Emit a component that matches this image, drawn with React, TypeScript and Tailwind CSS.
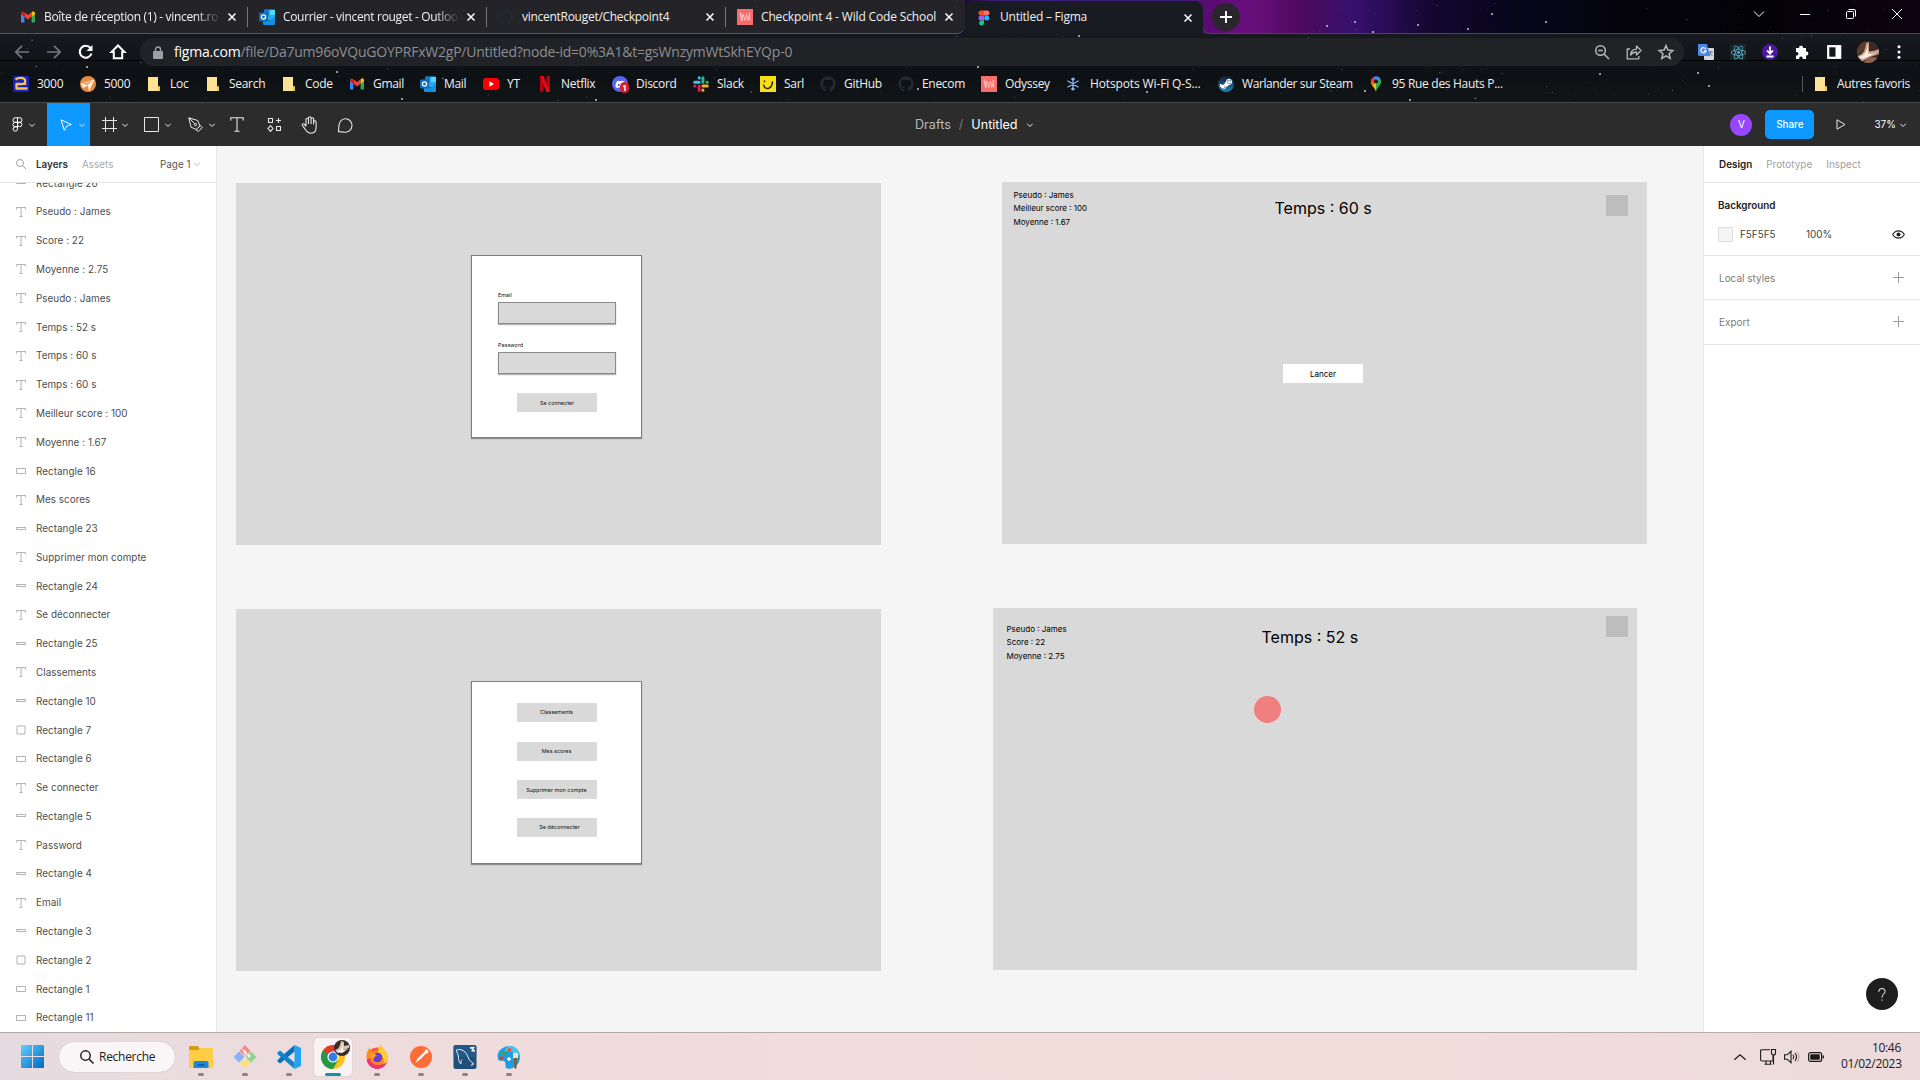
import React from 'react';
import { FaGithub, FaSteamSymbol, FaDiscord } from 'react-icons/fa';
import { SiReact } from 'react-icons/si';

type P = { c?: string; children?: React.ReactNode; vb?: string };

const Svg = ({ c = 'w-4 h-4', vb = '0 0 16 16', children }: P) => (
  <svg className={`${c} shrink-0 overflow-visible`} viewBox={vb} fill="none">
    {children}
  </svg>
);

/* ---------- starry browser theme ---------- */
const seeded = (seed: number) => () => {
  seed = (seed * 16807) % 2147483647;
  return seed / 2147483647;
};
const rnd = seeded(4217);
const stars = Array.from({ length: 300 }, () => ({
  x: rnd() * 1920,
  y: rnd() * 102,
  r: 0.35 + rnd() * rnd() * 0.6,
  o: 0.12 + rnd() * rnd() * 0.6,
}));
const brightStars = [
  [1418, 25], [1468, 29], [1355, 22], [1373, 32], [1546, 22], [1492, 14], [1327, 26],
  [1600, 74], [1709, 86], [1698, 73], [978, 67], [1147, 92], [1079, 36], [337, 72], [87, 67],
  [596, 100], [1365, 91], [1410, 100], [918, 89], [755, 1], [957, 1], [115, 28], [402, 99],
];
const Sky = () => (
  <svg className="absolute inset-0 h-[103px] w-[1920px]" viewBox="0 0 1920 103">
    {stars.map((s, i) => (
      <circle key={i} cx={s.x} cy={s.y} r={s.r} fill="#c9d2e0" opacity={s.o} />
    ))}
    {brightStars.map(([x, y], i) => (
      <circle key={i} cx={x} cy={y} r="1" fill="#f2f2ff" opacity="0.8" />
    ))}
  </svg>
);

/* ---------- brand marks ---------- */
const Gmail = () => (
  <Svg>
    <path d="M1 4.2v8.3c0 .6.4 1 1 1h2.4V7.2z" fill="#4285f4" />
    <path d="M15 4.2v8.3c0 .6-.4 1-1 1h-2.4V7.2z" fill="#34a853" />
    <path d="M4.4 3.2 8 6l3.6-2.8v4.6L8 10.5 4.4 7.800z" fill="#ea4335" />
    <path d="M1 4c0-1.500 1.700-2 2.700-1.300l.7.5v4.600L1 5.300z" fill="#c5221f" />
    <path d="M15 4c0-1.500-1.700-2-2.700-1.300l-.7.5v4.600L15 5.300z" fill="#fbbc04" />
  </Svg>
);
const Outlook = () => (
  <Svg>
    <rect x="5" y="0.500" width="11" height="11" rx="1" fill="#28a8ea" />
    <path d="M5 1h5.500v5H5z" fill="#0f78d4" />
    <path d="M10.500 1H16v5h-5.500z" fill="#50d9ff" />
    <path d="M4 8l6.500 4L16 8v7a1 1 0 0 1-1 1H5a1 1 0 0 1-1-1z" fill="#1490df" />
    <rect x="0" y="3.500" width="9" height="9" rx="1" fill="#0f6cbd" />
    <circle cx="4.500" cy="8" r="2.100" stroke="#fff" strokeWidth="1.300" />
  </Svg>
);
const Wild = () => (
  <Svg>
    <rect width="16" height="16" fill="#f76c6c" />
    <path d="M3 4.500l1.500 7L6.200 5l1.600 6.500L9.500 5l1.300 6.500 2.200-7M3.500 3.500l2 8M12 3.500l1 8" stroke="#fbc1bd" strokeWidth="1" />
  </Svg>
);
const FigmaMark = () => (
  <Svg>
    <path d="M5 .5h3v5H5a2.500 2.500 0 0 1 0-5z" fill="#f24e1e" />
    <path d="M8 .5h3a2.500 2.500 0 0 1 0 5H8z" fill="#ff7262" />
    <path d="M5 5.500h3v5H5a2.500 2.500 0 0 1 0-5z" fill="#a259ff" />
    <circle cx="10.700" cy="8" r="2.500" fill="#1abcfe" />
    <path d="M5 10.500h3V13a2.500 2.500 0 1 1-3-2.500z" fill="#0acf83" />
  </Svg>
);
const GitHubDim = () => <FaGithub className="h-4 w-4 shrink-0 text-[#24292e]" />;
const Folder = () => (
  <Svg>
    <path d="M2 1h10v9.500h2V15H2z" fill="#fde293" />
    <path d="M12 10.500h2V15h-3.500c1 0 1.500-.5 1.500-1.500z" fill="#eec95c" />
  </Svg>
);
const Site3000 = () => (
  <Svg>
    <rect width="16" height="16" rx="1" fill="#1a1fc0" />
    <path d="M2.500 3.500Q5 1.500 9 2q4 .5 3 4.500Q11 8.500 7 8H3.500v4.500H14.500M12 6.500V9" stroke="#f3c34b" strokeWidth="2.400" strokeLinejoin="round" />
  </Svg>
);
const Site5000 = () => (
  <Svg>
    <circle cx="8" cy="8" r="8" fill="#e98a3f" />
    <path d="M1 7.500 14.500 3.500 9 15.500 8 9.500 3 12z" fill="#fff3e4" />
    <path d="M2 8 13 4.500 7.500 9z" fill="#e9a065" />
  </Svg>
);
const YouTube = () => (
  <Svg>
    <rect y="2" width="16" height="12" rx="3" fill="#f00" />
    <path d="M6.500 5.300 11 8l-4.500 2.700z" fill="#fff" />
  </Svg>
);
const Netflix = () => (
  <Svg>
    <path d="M3 0h3.500v16L3 15.700z" fill="#b1060f" />
    <path d="M9.500 0H13v15.700L9.500 16z" fill="#b1060f" />
    <path d="M3 0h3.500L13 15.700 9.500 16z" fill="#e50914" />
  </Svg>
);
const Discord = () => (
  <div className="relative flex h-4 w-4 shrink-0 items-center justify-center rounded-full bg-[#5865f2]">
    <FaDiscord className="h-[11px] w-[11px] text-white" />
    <span className="absolute -right-px -bottom-px flex h-[11px] w-[9px] items-center justify-center rounded-full bg-[#d8202c] text-[8px] font-bold text-white">1</span>
  </div>
);
const Slack = () => (
  <Svg>
    <g strokeWidth="3" strokeLinecap="round">
      <path d="M6.200 1.700V2M1.700 6.200h4.500" stroke="#36c5f0" />
      <path d="M9.900 1.700v4.500M14.300 6.200H14" stroke="#2eb67d" />
      <path d="M14.300 9.900H9.900M9.900 14.300V14" stroke="#ecb22e" />
      <path d="M6.200 14.300V9.900M1.700 9.900H2" stroke="#e01e5a" />
    </g>
  </Svg>
);
const Sarl = () => (
  <Svg>
    <rect width="16" height="16" fill="#f7e017" />
    <path d="M3.500 8.500c1 6 8.500 5.500 9-3M4.500 4.500v1.800" stroke="#222" strokeWidth="1.500" />
  </Svg>
);
const Hotspot = () => (
  <Svg>
    <g stroke="#8ab4f8" strokeWidth="1.300">
      <path d="M7 1.500v13M1.500 4.800l11 6.400M1.500 11.200l11-6.400M5.300 2.500 7 4.200l1.700-1.700M5.300 13.500 7 11.800l1.700 1.700" />
    </g>
  </Svg>
);
const Steam = () => (
  <div className="flex h-4 w-4 shrink-0 items-center justify-center rounded-full bg-linear-to-b from-[#111d3a] to-[#1387b8]">
    <FaSteamSymbol className="h-[14px] w-[14px] text-white" />
  </div>
);
const MapPin = () => (
  <Svg>
    <path d="M8 16C7.500 12 2.800 9.500 2.800 5.500L8 5.500z" fill="#fbbc04" />
    <path d="M8 16c.5-4 5.200-6.500 5.200-10.500C13 3 11 1 8 5.500z" fill="#34a853" />
    <path d="M2.800 5.500A5.200 5.200 0 0 1 5 1.200L8 5.500 5 9z" fill="#ea4335" />
    <path d="M5 1.200A5.200 5.200 0 0 1 12.700 3L8 5.500z" fill="#4285f4" />
    <circle cx="8" cy="5.400" r="1.900" fill="#14181c" />
  </Svg>
);

/* ---------- browser chrome ---------- */
const Cross = () => (
  <Svg c="w-2 h-2" vb="0 0 8 8">
    <path d="M.5.5l7 7M7.500.5l-7 7" stroke="#fff" strokeWidth="1.500" />
  </Svg>
);

const tabs: { w: string; pad: string; icon: React.ReactNode; t: string; fade?: boolean; tr: string }[] = [
  { w: 'w-[239px]', pad: 'pl-3', icon: <Gmail />, t: 'Boîte de réception (1) - vincent.ro', fade: true, tr: 'tracking-[-0.33px]' },
  { w: 'w-[239px]', pad: 'pl-[11px]', icon: <Outlook />, t: 'Courrier - vincent rouget - Outloo', fade: true, tr: 'tracking-[-0.33px]' },
  { w: 'w-[239px]', pad: 'pl-[11px]', icon: <GitHubDim />, t: 'vincentRouget/Checkpoint4', tr: 'tracking-[-0.28px]' },
  { w: 'w-[240px]', pad: 'pl-[11px]', icon: <Wild />, t: 'Checkpoint 4 - Wild Code School', tr: 'tracking-[-0.15px]' },
];

const TabStrip = () => (
  <div className="relative flex h-[34px] items-stretch">
    <div className="flex w-[965px] rounded-br-lg border-b border-[#55545a] bg-[#252527]/95 pl-2">
      {tabs.map((t, i) => (
        <div key={i} className={`${t.w} ${t.pad} flex items-center ${i ? 'border-l border-[#77767a] [border-image:linear-gradient(to_bottom,transparent_22%,#77767a_22%,#77767a_80%,transparent_80%)_1]' : ''}`}>
          {t.icon}
          <div className={`relative ml-2 w-[177px] whitespace-nowrap ${t.tr} ${t.fade ? '[mask-image:linear-gradient(to_right,#000_86%,transparent_100%)]' : ''}`}>{t.t}</div>
          <div className="ml-[7px]"><Cross /></div>
        </div>
      ))}
    </div>
    <div className="mt-px flex w-[238px] items-center rounded-t-lg bg-[#181b21] pl-[11px]">
      <FigmaMark />
      <div className="relative -top-[0.5px] ml-2 w-[180px] tracking-[-0.22px]">Untitled – Figma</div>
      <div className="ml-1"><Cross /></div>
    </div>
    <div className="flex flex-1 items-center rounded-bl-lg border-b border-[#4b4850] pl-[9px]">
      <div className="flex h-7 w-7 items-center justify-center rounded-full bg-[#29272c]">
        <Svg c="w-3 h-3" vb="0 0 12 12"><path d="M6 0v12M0 6h12" stroke="#fff" strokeWidth="1.900" /></Svg>
      </div>
      <div className="mr-[18px] mb-[5px] ml-auto flex items-center gap-[36px]">
        <Svg c="w-[10px] h-[10px]" vb="0 0 10 10"><path d="M0 2.500l5 5 5-5" stroke="#fff" /></Svg>
        <Svg c="w-[10px] h-[10px]" vb="0 0 10 10"><path d="M0 5.500h10" stroke="#fff" /></Svg>
        <Svg c="w-[10px] h-[10px]" vb="0 0 10 10"><path d="M.5 3.500q0-1 1-1h5q1 0 1 1v5q0 1-1 1h-5q-1 0-1-1zM2.500.5H8q1.500 0 1.500 1.500v5.500" stroke="#fff" /></Svg>
        <Svg c="w-[10px] h-[10px]" vb="0 0 10 10"><path d="M0 0l10 10M10 0L0 10" stroke="#fff" /></Svg>
      </div>
    </div>
  </div>
);

const AddressBar = () => (
  <div className="relative flex h-[36px] items-center">
    <div className="absolute inset-x-0 top-[26px] h-px bg-black" />
    <div className="relative flex w-[140px] items-center gap-4 pl-[14px]">
      <Svg><path d="M15 8H2M8 1.800 1.800 8 8 14.200" stroke="#77797c" strokeWidth="1.700" /></Svg>
      <Svg><path d="M1 8h13M8 1.800 14.200 8 8 14.200" stroke="#77797c" strokeWidth="1.700" /></Svg>
      <Svg><path d="M13.500 9.500A6 6 0 1 1 12.500 4" stroke="#fff" strokeWidth="2.100" /><path d="M14.500 1v6h-6z" fill="#fff" /></Svg>
      <Svg><path d="M3.800 14.200V8H1.500L8 1.500 14.500 8h-2.300v6.200z" stroke="#fff" strokeWidth="2" /></Svg>
    </div>
    <div className="relative flex h-7 w-[1544px] items-center rounded-full bg-[#202226] pl-[13px] text-[14px]">
      <Svg c="w-[10px] h-[13px]" vb="0 0 10 13"><rect y="5" width="10" height="8" rx="1" fill="#9aa0a6" /><path d="M2.500 5.500V3.500a2.500 2.500 0 0 1 5 0v2" stroke="#9aa0a6" strokeWidth="1.400" /></Svg>
      <div className="relative -top-[0.5px] ml-[11px] whitespace-nowrap tracking-[-0.22px] text-[#8c8f93]"><span className="text-white">figma.com</span>/file/Da7um96oVQuGOYPRFxW2gP/Untitled?node-id=0%3A1&amp;t=gsWnzymWtSkhEYQp-0</div>
      <div className="mr-[10px] ml-auto flex gap-4">
        <Svg><g stroke="#b6b8bb" strokeWidth="1.500"><circle cx="6.500" cy="6.500" r="4.800" /><path d="M10 10l5 5M4.200 6.500h4.600" /></g></Svg>
        <Svg><path d="M4 5H1.200v9.800h11.600V12M4.500 11c.5-4 2.700-5.800 6-5.800V2L15 6.500 10.500 11V8C8 8 6 9 4.500 11z" stroke="#b6b8bb" strokeWidth="1.300" strokeLinejoin="round" /></Svg>
        <Svg><path d="M8 1.500l1.900 4.600 4.900.4-3.700 3.200 1.100 4.800L8 11.900l-4.200 2.600 1.100-4.800L1.200 6.500l4.900-.4z" stroke="#b6b8bb" strokeWidth="1.500" /></Svg>
      </div>
    </div>
    <div className="relative flex flex-1 items-center gap-4 pl-[14px]">
      <Svg><rect x="6" y="4" width="10" height="12" rx="1" fill="#d5d8dd" /><path d="M0 0h9l3 12H1.500Q0 12 0 10.500z" fill="#4a86e8" /><path d="M7.800 5.200A2.600 2.600 0 1 0 8 6.800H5.700" stroke="#fff" strokeWidth="1.200" /><path d="M10.500 8h4.500M12.700 7v1c0 2-1.200 3-2 3.500M11.500 9l3 3" stroke="#6b7a8a" /></Svg>
      <div className="flex h-4 w-4 items-center justify-center bg-[#202326]"><SiReact className="h-[15px] w-[15px] text-[#58bcd8]" /></div>
      <Svg><circle cx="8" cy="8" r="8" fill="#4a1a9e" /><path d="M8 2.500v6M5 6.500l3 3.200 3-3.200M4.500 12.500h7" stroke="#fff" strokeWidth="1.800" /></Svg>
      <Svg><path d="M2 4h3.200a1.900 1.900 0 1 1 3.700 0H12v3.600a1.900 1.900 0 1 1 0 3.700V15H8.600a1.800 1.800 0 1 0-3.300 0H2v-3.600a1.800 1.800 0 1 0 0-3.400z" fill="#fff" /></Svg>
      <Svg><rect x="2.200" y="2.200" width="12" height="11.600" stroke="#fff" strokeWidth="2.200" /><path d="M9.500 2h5v12h-5z" fill="#fff" /></Svg>
      <div className="-ml-px h-[22px] w-[22px] overflow-hidden rounded-full">
        <Svg c="w-[22px] h-[22px]" vb="0 0 22 22">
          <rect width="22" height="22" fill="#3a2a24" />
          <path d="M0 0h9l-1 8-8 6z" fill="#5b3d30" />
          <path d="M0 15c5-1 8-4 9-13l3-1v9c3 1 7-1 10-2v5l-9 3-7 4H0z" fill="#c89f88" />
          <path d="M1 16c6-1 9-5 10-13v9c2 2 6 0 9-1l-7 4-7 3z" fill="#fbeee4" />
          <path d="M6 22l6-6 10 1v5z" fill="#8f6552" />
        </Svg>
      </div>
      <Svg c="w-4 h-4 -ml-[3px]"><g fill="#fff" transform="translate(-1 0)"><circle cx="8" cy="2.800" r="1.500" /><circle cx="8" cy="8" r="1.500" /><circle cx="8" cy="13.200" r="1.500" /></g></Svg>
    </div>
  </div>
);

const bookmarks: { w: string; icon: React.ReactNode; t: string }[] = [
  { w: 'w-[67px]', icon: <Site3000 />, t: '3000' },
  { w: 'w-[66px]', icon: <Site5000 />, t: '5000' },
  { w: 'w-[59px]', icon: <Folder />, t: 'Loc' },
  { w: 'w-[76px]', icon: <Folder />, t: 'Search' },
  { w: 'w-[68px]', icon: <Folder />, t: 'Code' },
  { w: 'w-[71px]', icon: <Gmail />, t: 'Gmail' },
  { w: 'w-[63px]', icon: <Outlook />, t: 'Mail' },
  { w: 'w-[54px]', icon: <YouTube />, t: 'YT' },
  { w: 'w-[75px]', icon: <Netflix />, t: 'Netflix' },
  { w: 'w-[81px]', icon: <Discord />, t: 'Discord' },
  { w: 'w-[67px]', icon: <Slack />, t: 'Slack' },
  { w: 'w-[60px]', icon: <Sarl />, t: 'Sarl' },
  { w: 'w-[78px]', icon: <GitHubDim />, t: 'GitHub' },
  { w: 'w-[83px]', icon: <GitHubDim />, t: 'Enecom' },
  { w: 'w-[85px] tracking-[-0.3px]', icon: <Wild />, t: 'Odyssey' },
  { w: 'w-[152px] tracking-[-0.13px]', icon: <Hotspot />, t: 'Hotspots Wi-Fi Q-S...' },
  { w: 'w-[150px] tracking-[-0.4px]', icon: <Steam />, t: 'Warlander sur Steam' },
  { w: 'w-[150px]', icon: <MapPin />, t: '95 Rue des Hauts P...' },
];

const Bookmarks = () => (
  <div className="relative flex h-[33px] items-center border-b border-[#47484a] pb-[4px] pl-[13px] tracking-[-0.3px] whitespace-nowrap">
    {bookmarks.map((b, i) => (
      <div key={i} className={`${b.w} flex shrink-0 items-center gap-2`}>{b.icon}<span>{b.t}</span></div>
    ))}
    <div className="mr-[10px] ml-auto flex items-center gap-2">
      <div className="mr-[2px] h-4 w-px bg-[#55585b]" />
      <Folder />
      <span>Autres favoris</span>
    </div>
  </div>
);

const Browser = () => (
  <header className="relative h-[103px] shrink-0 overflow-hidden bg-[#101317] font-['Open_Sans',sans-serif] text-[12px] text-[#f1f1f1]">
    <div className="absolute inset-x-0 top-0 h-[34px] bg-[linear-gradient(90deg,#1a0630_0%,#1a0630_50%,#3a1f7a_52%,#3a1f7a_61%,#5a0a72_63%,#6a0f7c_65%,#4a0a5c_68%,#37106f_70.500%,#140730_74.500%,#07061a_79%,#04030c_85%,#030206_92%,#0c0310_100%)]" />
    <div className="absolute inset-x-0 top-[34px] h-[70px] bg-[linear-gradient(180deg,#16191e,#0e1114_60%,#121518)]" />
    <Sky />
    <TabStrip />
    <AddressBar />
    <Bookmarks />
  </header>
);

/* ---------- editor toolbar ---------- */
const Down = ({ c = 'w-[6px] h-[6px]', s = '#e8e8e8' }: { c?: string; s?: string }) => (
  <Svg c={c} vb="0 0 6 6"><path d="M.3 1.800 3 4.500l2.700-2.700" stroke={s} strokeWidth="1" /></Svg>
);

const Toolbar = () => (
  <div className="relative flex h-[43px] shrink-0 items-stretch bg-[#2c2c2c] text-[#fff]">
    <div className="flex w-[47px] items-center pl-[10px]">
      <Svg c="w-[15px] h-[15px]" vb="0 0 15 15"><g stroke="#fff" strokeWidth="1"><path d="M7.500.8H5.200a2.200 2.200 0 0 0 0 4.500h2.300zM7.500.8h2.300a2.200 2.200 0 0 1 0 4.500H7.500zM7.500 5.300H5.200a2.200 2.200 0 0 0 0 4.500h2.300zM7.500 9.800H5.200a2.200 2.200 0 1 0 2.300 2.200z" /><circle cx="9.700" cy="7.500" r="2.200" /></g></Svg>
      <div className="ml-[4px]"><Down /></div>
    </div>
    <div className="flex w-[43px] items-center bg-[#0d99ff] pl-[13px]">
      <Svg c="w-3 h-3" vb="0 0 12 12"><path d="M1 .8l10.300 4.700-4.500 1.600L4.300 11.300z" stroke="#fff" strokeLinejoin="round" /></Svg>
      <div className="ml-[7px]"><Down /></div>
    </div>
    <div className="flex items-center pl-[12px]">
      <Svg c="w-[15px] h-[15px]" vb="0 0 15 15"><path d="M3.500 0v15M11.500 0v15M0 3.500h15M0 11.500h15" stroke="#e8e8e8" /></Svg>
      <div className="ml-[5px]"><Down /></div>
    </div>
    <div className="flex items-center pl-[16px]">
      <Svg c="w-[15px] h-[15px]" vb="0 0 15 15"><path d="M.5.5h14v14H.5z" stroke="#e8e8e8" /></Svg>
      <div className="ml-[6px]"><Down /></div>
    </div>
    <div className="flex items-center pl-[17px]">
      <Svg c="w-[15px] h-[15px]" vb="0 0 15 15"><g stroke="#e8e8e8"><path d="M.8.8l9 2.700 2.200 5.500-3.500 3.500L3 10.200zM.8.8l6 6M8 12.800l4.300-4.300 2 2-4 4z" /><circle cx="7.500" cy="7.500" r="1.200" /></g></Svg>
      <div className="ml-[6px]"><Down /></div>
    </div>
    <div className="flex items-center pl-[15px]">
      <Svg c="w-[14px] h-[15px]" vb="0 0 14 15"><path d="M.8 3.500V.8h12.400v2.700M7 .8v13.400M4.500 14.200h5" stroke="#e8e8e8" strokeWidth="1.100" /></Svg>
    </div>
    <div className="flex items-center pl-[23px]">
      <Svg c="w-[15px] h-[15px]" vb="0 0 15 15"><path d="M1.500 1.500h4v4h-4zM9.500 9.500h4v4h-4zM3.500 8.700 6 11.500l-2.500 2.800L1 11.500zM11.500 1v5M9 3.500h5" stroke="#e8e8e8" strokeWidth="1.100" /></Svg>
    </div>
    <div className="flex items-center pl-[19px]">
      <Svg c="w-[17px] h-[18px]" vb="0 0 17 18"><path d="M5 10V3.500a1.200 1.200 0 0 1 2.500 0V8M7.500 8V2a1.200 1.200 0 0 1 2.600 0v6M10.100 8V3a1.200 1.200 0 0 1 2.500 0v5.500M12.600 6a1.200 1.200 0 0 1 2.500 0v5.500c0 3.500-2 5.700-5 5.700-4 0-4.800-2.200-6.200-4.400L1.300 9.300c-.5-1.300 1-2.100 2-1.100L5 10.500" stroke="#e8e8e8" strokeWidth="1.100" /></Svg>
    </div>
    <div className="flex items-center pt-px pl-[20px]">
      <Svg c="w-[15px] h-[15px]" vb="0 0 15 15"><path d="M1 14.200V7.500a6.500 6.700 0 1 1 6.500 6.700z" transform="rotate(5 7.500 7.500)" stroke="#e8e8e8" strokeWidth="1.100" strokeLinejoin="round" /></Svg>
    </div>
    <div className="absolute inset-y-0 left-[915px] flex items-center pt-px text-[12.600px]">
      <span className="text-[#b9b9b9]">Drafts</span>
      <span className="mx-[8px] text-[#7b7b7b]">/</span>
      <span className="text-white">Untitled</span>
      <div className="ml-[9px]"><Down /></div>
    </div>
    <div className="ml-auto flex items-center pr-[14px]">
      <div className="flex h-[22px] w-[22px] items-center justify-center rounded-full bg-[#9747ff] text-[10px]">V</div>
      <div className="ml-[13px] flex h-[29px] w-[49px] items-center justify-center rounded-[5px] bg-[#0d99ff] text-[9.900px] font-medium">Share</div>
      <Svg c="w-[10px] h-[11px] ml-[22px]" vb="0 0 10 11"><path d="M1 .8l8 4.700-8 4.700z" stroke="#e8e8e8" strokeLinejoin="round" /></Svg>
      <span className="ml-[28px] text-[9.900px] tracking-[0.08px]">37%</span>
      <div className="ml-[4px]"><Down /></div>
    </div>
  </div>
);

/* ---------- panels ---------- */
const layers = [
  '- Rectangle 26', 'T Pseudo : James', 'T Score : 22', 'T Moyenne : 2.75', 'T Pseudo : James', 'T Temps : 52 s',
  'T Temps : 60 s', 'T Temps : 60 s', 'T Meilleur score : 100', 'T Moyenne : 1.67', 'r Rectangle 16', 'T Mes scores',
  '- Rectangle 23', 'T Supprimer mon compte', '- Rectangle 24', 'T Se déconnecter', '- Rectangle 25', 'T Classements',
  '- Rectangle 10', 's Rectangle 7', 'r Rectangle 6', 'T Se connecter', '- Rectangle 5', 'T Password',
  '- Rectangle 4', 'T Email', '- Rectangle 3', 's Rectangle 2', 'r Rectangle 1', 'r Rectangle 11',
];
const glyphs: Record<string, React.ReactNode> = {
  T: <path d="M.5 2.500v-2h9v2M5 .5v9M3.500 9.500h3" stroke="#b3b3b3" />,
  '-': <path d="M.5 3.500h9v2h-9z" stroke="#b3b3b3" />,
  r: <path d="M.5 2.500h9v5h-9z" stroke="#b3b3b3" />,
  s: <path d="M1 1h8v8h-8z" stroke="#b3b3b3" />,
};

const LeftPanel = () => (
  <aside className="flex w-[217px] shrink-0 flex-col border-r border-[#e5e5e5] bg-white">
    <div className="flex h-[37px] shrink-0 items-center border-b border-[#e5e5e5] pl-4 font-medium">
      <Svg c="w-[10px] h-[10px]" vb="0 0 10 10"><circle cx="4" cy="4" r="3.500" stroke="#a0a0a0" /><path d="M6.500 6.500 10 10" stroke="#a0a0a0" /></Svg>
      <span className="mt-px ml-[10px] w-[46px] font-semibold text-[#333]">Layers</span>
      <span className="mt-px w-[78px] font-normal text-[#a8a8a8]">Assets</span>
      <span className="mt-px font-normal text-[#555]">Page 1</span>
      <div className="ml-[4px]"><Down s="#b3b3b3" /></div>
    </div>
    <div className="min-h-0 flex-1 overflow-hidden">
      <div className="-mt-[14.250px]">
        {layers.map((l, i) => (
          <div key={i} className="flex h-[28.790px] items-center gap-[10px] pl-4 tracking-[0.03px] text-[#4d4d4d]">
            <Svg c="w-[10px] h-[10px]" vb="0 0 10 10">{glyphs[l[0]]}</Svg>
            <span>{l.slice(2)}</span>
          </div>
        ))}
      </div>
    </div>
  </aside>
);

const Plus = () => <Svg c="w-[11px] h-[11px] -mt-[3px]" vb="0 0 11 11"><path d="M5.500 0v11M0 5.500h11" stroke="#9a9a9a" /></Svg>;

const RightPanel = () => (
  <aside className="relative flex w-[217px] shrink-0 flex-col border-l border-[#e5e5e5] bg-white">
    <div className="flex h-[37px] shrink-0 items-center gap-[14px] border-b border-[#e5e5e5] pt-px pl-[15px] tracking-[0.04px] text-[#a0a0a0]">
      <span className="font-semibold tracking-normal text-[#222]">Design</span>
      <span>Prototype</span>
      <span>Inspect</span>
    </div>
    <div className="flex h-[73px] flex-col border-b border-[#e5e5e5] pt-[8px] pl-[14px]">
      <div className="flex h-[29px] items-center font-semibold text-[#222]">Background</div>
      <div className="flex h-[28px] items-center text-[#444]">
        <div className="h-[15px] w-[15px] border border-[#dedede] bg-[#f5f5f5]" />
        <span className="mt-px ml-[7px] w-[66px]">F5F5F5</span>
        <span className="mt-px">100%</span>
        <Svg c="w-[13px] h-[9px] mr-[15px] ml-auto" vb="0 0 13 9"><path d="M.7 4.500C3.500-.3 9.500-.3 12.300 4.500 9.500 9.300 3.500 9.300.7 4.500z" stroke="#222" strokeWidth="1.100" /><circle cx="6.500" cy="4.500" r="2" fill="#222" /></Svg>
      </div>
    </div>
    <div className="flex h-[44px] items-center justify-between border-b border-[#e5e5e5] pt-[2px] pr-4 pl-[15px] tracking-[0.06px] text-[#7a7a7a]"><span>Local styles</span><Plus /></div>
    <div className="flex h-[45px] items-center justify-between border-b border-[#e5e5e5] pt-px pr-4 pl-[15px] tracking-[0.06px] text-[#7a7a7a]"><span>Export</span><Plus /></div>
    <div className="absolute right-[22px] bottom-[22px] flex h-8 w-8 items-center justify-center rounded-full bg-[#1e1e1e]">
      <Svg c="w-[8px] h-[13px]" vb="0 0 8 13"><path d="M.8 4V3.300A3.200 2.800 0 0 1 7.200 3.300C7.200 6 4 5.800 4 9.500M4 11.500v1.200" stroke="#fff" /></Svg>
    </div>
  </aside>
);

/* ---------- canvas ---------- */
const Frame = ({ c, children }: P) => <div className={`absolute h-[362px] bg-[#d9d9d9] ${c}`}>{children}</div>;
const Card = ({ children }: P) => (
  <div className="absolute top-[72px] left-[235px] h-[183px] w-[171px] border border-[#7d7d7d] bg-white text-[5.450px] text-[#111] shadow-[0_1px_1px_rgba(0,0,0,0.35)]">{children}</div>
);
const Btn = ({ c, children }: P) => <div className={`absolute left-[45px] flex h-[19px] w-[80px] items-center justify-center bg-[#d9d9d9] ${c}`}>{children}</div>;
const Field = ({ c }: P) => <div className={`absolute left-[26px] h-[22px] w-[118px] border border-[#8a8a8a] bg-[#d9d9d9] shadow-[0_1px_1px_rgba(0,0,0,0.3)] ${c}`} />;

const Canvas = () => (
  <main className="relative flex-1 overflow-hidden bg-[#f5f5f5] text-black">
    <Frame c="left-[19px] top-[37px] w-[644.500px]">
      <Card>
        <span className="absolute top-[35px] left-[26px]">Email</span>
        <Field c="top-[46px]" />
        <span className="absolute top-[85px] left-[26px]">Password</span>
        <Field c="top-[96px]" />
        <Btn c="top-[137px] pt-px">Se connecter</Btn>
      </Card>
    </Frame>
    <Frame c="left-[19px] top-[463px] w-[644.500px]">
      <Card>
        <Btn c="top-[21px] pr-px">Classements</Btn>
        <Btn c="top-[60px] pr-px">Mes scores</Btn>
        <Btn c="top-[98px] pt-px pr-px">Supprimer mon compte</Btn>
        <Btn c="top-[136px] pl-[5px]">Se déconnecter</Btn>
      </Card>
    </Frame>
    <Frame c="left-[785px] top-[36px] w-[644.500px]">
      <div className="absolute top-[7px] left-[11.500px] text-[8px] leading-[13.400px] whitespace-nowrap">
        <div>Pseudo : James</div><div>Meilleur score : 100</div><div>Moyenne : 1.67</div>
      </div>
      <div className="absolute top-[14px] left-[272.500px] text-[16px] leading-6 whitespace-nowrap">Temps : 60 s</div>
      <div className="absolute top-[13px] left-[604px] h-[21px] w-[22px] bg-[#bdbdbd]" />
      <div className="absolute top-[182px] left-[281px] flex h-[19px] w-[80px] items-center justify-center bg-white text-[8px]">Lancer</div>
    </Frame>
    <Frame c="left-[775.500px] top-[462px] w-[644px]">
      <div className="absolute top-[15px] left-[14px] text-[8px] leading-[13.400px] whitespace-nowrap">
        <div>Pseudo : James</div><div>Score : 22</div><div>Moyenne : 2.75</div>
      </div>
      <div className="absolute top-[17px] left-[269px] text-[16px] leading-6 whitespace-nowrap">Temps : 52 s</div>
      <div className="absolute top-[8px] left-[613.500px] h-[21px] w-[22px] bg-[#bdbdbd]" />
      <div className="absolute top-[87.500px] left-[261px] h-[27px] w-[27px] rounded-full bg-[#f08080]" />
    </Frame>
  </main>
);

/* ---------- taskbar ---------- */
const apps: { active?: boolean; icon: React.ReactNode }[] = [
  { icon: <><path d="M1 1h8l2 3h12v5H0V2q0-1 1-1z" fill="#d99a16" /><path d="M0 5h9l2-2h12q1 0 1 1v18q0 1-1 1H1q-1 0-1-1z" fill="#ffce45" /><path d="M4.500 23v-5.500Q4.500 16 6 16h12q1.500 0 1.500 1.500V23z" fill="#1e88d8" /><path d="M8.500 20h7" stroke="#0a5aa0" strokeWidth="1.600" /></> },
  { icon: <><path d="M12 0l5.500 6-5.500 5.500L6.500 6z" fill="#f58a8a" /><path d="M6 6.500l5.500 5.500L6 17.500.5 12z" fill="#8ab0f5" /><path d="M18 6.500l5.500 5.500-5.500 5.500-5.500-5.500z" fill="#8ed68a" /><path d="M12 12.500l5.500 5.500-5.500 5.500L6.500 18z" fill="#f8e07f" /><path d="M9 4l6 6M12 7v10" stroke="#f3e4e2" strokeWidth="1.300" /><circle cx="12" cy="7" r="1.400" fill="#fff" /><circle cx="16" cy="11" r="1.400" fill="#fff" /></> },
  { icon: <><path d="M17.500 0 24 3v18l-6.500 3z" fill="#24a4ef" /><path d="M17.500 0v6.500L3 18.500.5 16.500v-1.500z" fill="#0a6ebd" /><path d="M17.500 24v-6.500L3 5.500.5 7.500V9z" fill="#1283cf" /></> },
  { active: true, icon: <><circle cx="12" cy="12" r="12" fill="#fbc116" /><path d="M1.600 6A12 12 0 0 0 12 24l5.200-9L12 12z" fill="#229a4a" /><path d="M1.600 6l5.200 9L12 6z" fill="#229a4a" /><path d="M1.600 6A12 12 0 0 1 22.400 6H12a6 6 0 0 0-5 3z" fill="#e33b2e" /><circle cx="12" cy="12" r="5.600" fill="#fff" /><circle cx="12" cy="12" r="4.400" fill="#2f7de9" /><circle cx="21" cy="3" r="8" fill="#3a2c27" /><path d="M14 5c4-1 5-4 6-9l3 1v4l5-1v3l-6 2-5 3z" fill="#d9c3b5" /><path d="M15 7c4-1 6-3 7-9v7l5-1-6 4z" fill="#fbf3ec" /></> },
  { icon: <><circle cx="12" cy="13" r="10.500" fill="#ff5a36" /><path d="M2 7l2.500-4 2.500 3.500c2-1 4 0 6-1 0-2 1-4 3-5.500 0 4 7 6 7 14a10 10 0 0 1-4 7c-6 3-14 1-16-5C2 14 1 11 2 7z" fill="#ff8a1f" /><path d="M16 0c0 4 7 6 7 14 0 3-2 6-4 7 1-5-1-11-6-14 0-3 1-6 3-7z" fill="#ffcc33" /><path d="M1.800 15c1 5.500 5.700 9 10.200 9 4.500 0 8.500-2.500 10-7-3 3-10 4-13 2-3-1-4-4-4-6z" fill="#f0307a" /><circle cx="12.500" cy="12.500" r="4.800" fill="#6a3fd0" /><path d="M5 9c3-1 5-1 7 2-2 0-3 1-3 3-2 0-4-2-4-5z" fill="#ff9f2e" /></> },
  { icon: <><circle cx="12" cy="12" r="11" fill="#ff6c37" /><path d="M6 18l3-5 7-6.500 1.500 1.500-7 7z" fill="#fff" /><circle cx="17.500" cy="6.500" r="1.900" fill="#fff" /></> },
  { icon: <><rect x=".5" y="0" width="23" height="24" rx="2" fill="#1f4e79" /><path d="M2.500 0h19q2 0 2 2v10H.5V2q0-2 2-2z" fill="#2a6496" opacity=".5" /><path d="M3.500 5c5-2 10 2 11.500 7 1 3.500 3 4.500 6 7-2 0-3 .5-2 2M3.500 5c0 3 2 4 2 7 0 2 0 5 2.500 7 0-2 0-3.500 1-4.500" stroke="#e8f1f8" strokeWidth="1" /><path d="M17 3l4.500-.5M18.500 5.500l3.500.5M19.500 2l1 4" stroke="#fff" strokeWidth="1.400" /></> },
  { icon: <><path d="M13 1C4 1-1 8 1 14c1 3 4 1 6 2 3 2 0 6 3 7.500C17 25 23 19 23 12S18 1 13 1z" fill="#1f9be0" /><path d="M13 1c5 0 10 4 10 11-3-4-9-6-16-6 2-3 4-5 6-5z" fill="#4cc3ee" /><circle cx="7" cy="8" r="2.200" fill="#3aa655" /><circle cx="12.500" cy="5" r="2.100" fill="#e8573a" /><circle cx="4.500" cy="13" r="1.800" fill="#d83b2e" /><path d="M12 12v4M10 14h4" stroke="#fff" strokeWidth="1.500" /><path d="M16 8h5v5h-5z" fill="#f0e4c8" /><path d="M17 13h3l-.5 10q-1 2-2 0z" fill="#8a5a2b" /></> },
];

const Taskbar = () => (
  <footer className="flex h-[48px] shrink-0 items-center border-t border-[#b5a9aa] bg-[linear-gradient(90deg,#e6dbe0_0%,#efdcdc_22%,#f1dddb_45%,#f1ddda_75%,#ecdadc_100%)] font-['Open_Sans',sans-serif] text-[12px] text-[#1b1b1b]">
    <Svg c="w-[23px] h-[23px] ml-[21px]" vb="0 0 23 23">
      <defs><linearGradient id="win" x1="0" y1="0" x2="1" y2="1"><stop stopColor="#5fd0fa" /><stop offset="1" stopColor="#0069c4" /></linearGradient></defs>
      <path d="M0 1q0-1 1-1h10v11H0zM12 0h10q1 0 1 1v10H12zM0 12h11v11H1q-1 0-1-1zM12 12h11v10q0 1-1 1H12z" fill="url(#win)" />
    </Svg>
    <div className="ml-[15px] flex h-[30px] w-[116px] items-center rounded-full bg-[#faf5f6] pl-[21px] shadow-[0_0_1px_rgba(0,0,0,0.25)]">
      <Svg c="w-[14px] h-[14px]" vb="0 0 14 14"><circle cx="5.500" cy="5.500" r="4.700" stroke="#222" strokeWidth="1.500" /><path d="M9 9l4.500 4.500" stroke="#222" strokeWidth="1.600" /></Svg>
      <span className="ml-[5px] tracking-[-0.28px]">Recherche</span>
    </div>
    <div className="ml-[4px] flex">
      {apps.map((a, i) => (
        <div key={i} className="flex w-11 justify-center">
          <div className={`relative flex h-[38px] w-[38px] items-center justify-center rounded ${a.active ? 'bg-[#faf3f3] shadow-[0_0_1px_rgba(0,0,0,0.3)]' : ''}`}>
            <Svg c="w-6 h-6" vb="0 0 24 24">{a.icon}</Svg>
            <div className={`absolute bottom-0 h-[3px] rounded-full ${a.active ? 'w-4 bg-[#1a8fae]' : 'w-[6px] bg-[#8a8284]'}`} />
          </div>
        </div>
      ))}
    </div>
    <div className="mr-[19px] ml-auto flex items-center">
      <Svg c="w-3 h-[6px]" vb="0 0 12 6"><path d="M.3 5.700 6 .7l5.700 5" stroke="#1b1b1b" strokeWidth="1.200" /></Svg>
      <Svg c="w-4 h-4 ml-[14px]"><path d="M10 .7H2Q.6.700.6 2v8.500Q.6 12 2 12h11V7M4.500 15.300h7M6 12v3M10.500 12v3M11.500.5h4V4q0 2-2 2t-2-2zM13.500 6v9.500" stroke="#1b1b1b" strokeWidth="1.100" /></Svg>
      <Svg c="w-4 h-[14px] ml-[8px]" vb="0 0 16 14"><path d="M.6 4.800h2.600L7 1.300v11.400L3.200 9.200H.6zM9 4.700q1.600 2.300 0 4.600M11 3q3 4 0 8" stroke="#1b1b1b" strokeWidth="1.100" /><path d="M13 1.500q4 5.500 0 11" stroke="#a9a0a0" /></Svg>
      <Svg c="w-4 h-[10px] ml-[8px]" vb="0 0 16 10"><rect x=".6" y=".6" width="13" height="8.800" rx="2" stroke="#1b1b1b" strokeWidth="1.200" /><rect x="2.200" y="2.200" width="9.600" height="5.600" rx=".8" fill="#1b1b1b" /><path d="M15.200 3.500v3" stroke="#1b1b1b" strokeWidth="1.400" /></Svg>
      <div className="-mt-px ml-[17px] w-[60px] text-right text-[12px] leading-4 tracking-[-0.3px] whitespace-nowrap"><div>10:46</div><div>01/02/2023</div></div>
    </div>
  </footer>
);

export default function App() {
  return (
    <div className="flex h-[1080px] w-[1920px] flex-col overflow-hidden bg-[#f5f5f5] font-['Inter',sans-serif] text-[9.900px] leading-normal">
      <Browser />
      <Toolbar />
      <div className="flex min-h-0 flex-1">
        <LeftPanel />
        <Canvas />
        <RightPanel />
      </div>
      <Taskbar />
    </div>
  );
}
